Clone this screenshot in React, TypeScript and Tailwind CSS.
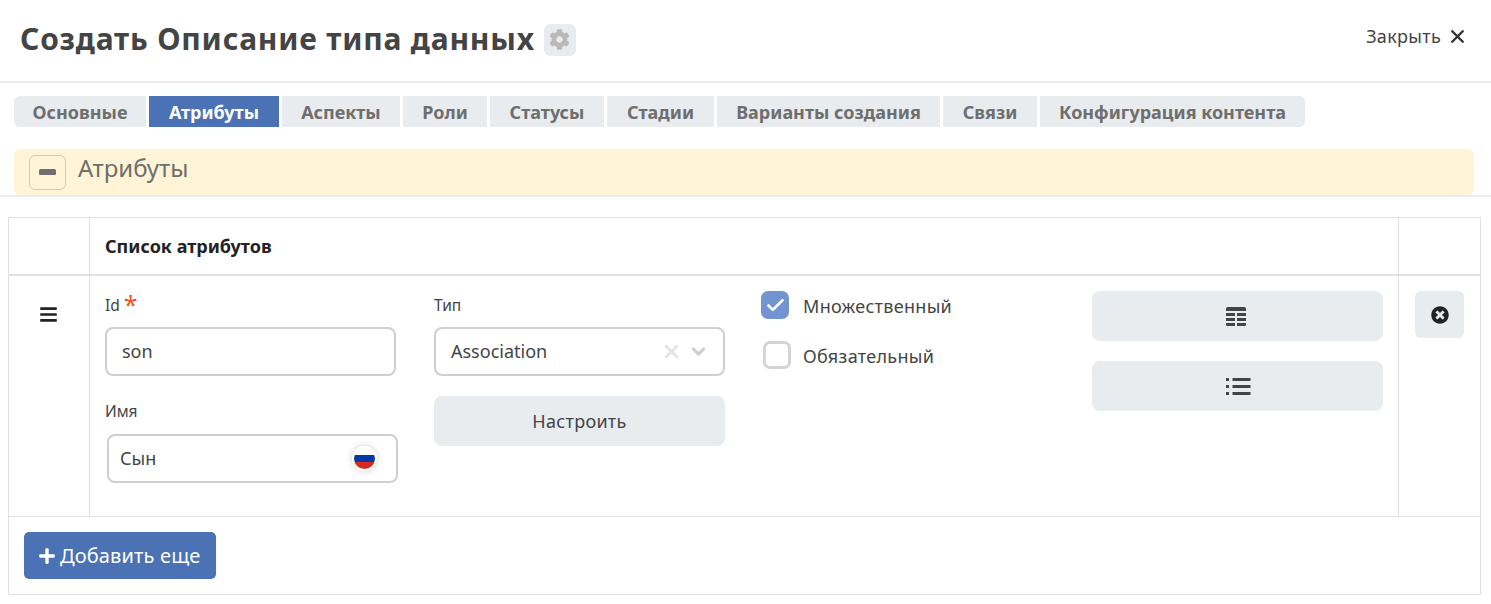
import { Check, ChevronDown, X } from "lucide-react";
import { FaTimesCircle, FaPlus, FaBars, FaCog } from "react-icons/fa";

const tabs = [
  { t: "Основные", w: "w-[132px]", c: "rounded-l-[6px]" },
  { t: "Атрибуты", w: "w-[130px]", a: true },
  { t: "Аспекты", w: "w-[118px]" },
  { t: "Роли", w: "w-[84px]" },
  { t: "Статусы", w: "w-[114px]" },
  { t: "Стадии", w: "w-[107px]" },
  { t: "Варианты создания", w: "w-[223px]" },
  { t: "Связи", w: "w-[94px]" },
  { t: "Конфигурация контента", w: "w-[265px]", c: "rounded-r-[6px]" },
];

function TableIcon() {
  return (
    <svg width="20" height="19" viewBox="0 0 20 19" fill="#444" className="mr-[3px]">
      <path d="M1.5 0h17A1.5 1.5 0 0 1 20 1.5V4H0V1.5A1.5 1.5 0 0 1 1.5 0z" />
      <rect x="0" y="6" width="9" height="3" />
      <rect x="11" y="6" width="9" height="3" />
      <rect x="0" y="11" width="9" height="3" />
      <rect x="11" y="11" width="9" height="3" />
      <path d="M0 16h9v3H1.5A1.5 1.5 0 0 1 0 17.5z" />
      <path d="M11 16h9v1.5a1.5 1.5 0 0 1-1.500 1.500H11z" />
    </svg>
  );
}

function ListIcon() {
  return (
    <svg width="25" height="20" viewBox="0 0 25 20" fill="#444" className="ml-[2px] mt-[2px]">
      <rect x="0" y="1" width="3" height="3" />
      <rect x="0" y="8" width="3" height="3" />
      <rect x="0" y="15" width="3" height="3" />
      <rect x="6.500" y="1" width="18" height="3" />
      <rect x="6.500" y="8" width="18" height="3" />
      <rect x="6.500" y="15" width="18" height="3" />
    </svg>
  );
}

export default function App() {
  return (
    <div className="w-[1491px] h-[604px] overflow-hidden bg-white text-[#444] font-['Noto_Sans',sans-serif]">
      <header className="h-[83px] border-b-2 border-[#e9edf0] flex items-center justify-between pl-[20px] pr-[23px] pb-[4px]">
        <div className="flex items-center">
          <h1 className="text-[30px] leading-[40px] font-bold text-[#444] tracking-[0.8px]">Создать Описание типа данных</h1>
          <span className="ml-[9px] mt-[2px] w-[32px] h-[32px] rounded-[6px] bg-[#e8ecef] flex items-center justify-center text-[#b9b9b9]">
            <FaCog size={21} />
          </span>
        </div>
        <div className="flex items-center text-[18px] tracking-[0.3px] text-[#444] -mt-[4px]">
          <span>Закрыть</span>
          <X size={21} strokeWidth={2.8} className="ml-[6px] text-[#333]" />
        </div>
      </header>

      <nav className="flex gap-[3px] pl-[14px] mt-[13px] h-[31px]">
        {tabs.map((x) => (
          <div
            key={x.t}
            className={`${x.w} ${x.c ?? ""} ${x.a ? "bg-[#4a72b5] text-white" : "bg-[#e8ecef] text-[#6e6e6e]"} flex items-center justify-center pt-[2px] text-[18px] font-bold`}
          >
            {x.t}
          </div>
        ))}
      </nav>

      <div className="mt-[22px] border-b-2 border-[#e9edf0] h-[48px]">
        <div className="mx-[14px] w-[1460px] h-[46px] bg-[#fff4d6] rounded-[6px] flex items-center pl-[15px]">
          <span className="w-[37px] h-[35px] border border-[#cfcabb] rounded-[6px] flex items-center justify-center">
            <svg width="17" height="6" viewBox="0 0 17 6" fill="#6e6e6e"><rect width="17" height="6" rx="1.500" /></svg>
          </span>
          <span className="ml-[12px] text-[24px] leading-[30px] text-[#6e6e6e] -mt-[9px]">Атрибуты</span>
        </div>
      </div>

      <section className="mt-[20px] ml-[8px] w-[1473px] h-[378px] border border-[#dfe1e6] flex flex-col">
        <div className="h-[58px] border-b-2 border-[#dfe1e6] grid grid-cols-[81px_1309px_1fr]">
          <div className="border-r border-[#dfe1e6]" />
          <div className="border-r border-[#dfe1e6] flex items-center pl-[15px] text-[18px] font-bold text-[#222]">Список атрибутов</div>
          <div />
        </div>

        <div className="h-[241px] border-b border-[#dfe1e6] grid grid-cols-[81px_1309px_1fr]">
          <div className="border-r border-[#dfe1e6] flex justify-center pt-[29px] pr-[2px] text-[#222]">
            <FaBars size={19} />
          </div>

          <div className="border-r border-[#dfe1e6] pl-[15px] pt-[15px] flex">
            <div className="w-[291px] shrink-0">
              <label className="flex items-start h-[36px] text-[15.500px] leading-[28px] text-[#444]">
                Id<span className="ml-[4px] -mt-[2px] text-[25px] leading-[30px] text-[#f4511e]">*</span>
              </label>
              <div className="h-[49px] border-2 border-[#cfcfcf] rounded-[8px] flex items-center pl-[15px] text-[18px] text-[#444]">son</div>
              <div className="h-[58px] pt-[25px] text-[15.500px] leading-[20px] text-[#444]">Имя</div>
              <div className="ml-[2px] w-[291px] h-[49px] border-2 border-[#cfcfcf] rounded-[8px] flex items-center justify-between pl-[11px] pr-[19px] text-[18px] text-[#444]">
                <span>Сын</span>
                <span className="w-[25px] h-[25px] rounded-full border-[2px] border-white shadow-[0_0_7px_rgba(0,0,0,0.2)] overflow-hidden flex flex-col">
                  <span className="h-[7px] bg-white" />
                  <span className="h-[7px] bg-[#0039a6]" />
                  <span className="flex-1 bg-[#d52b1e]" />
                </span>
              </div>
            </div>

            <div className="w-[291px] ml-[38px] shrink-0">
              <div className="h-[36px] text-[15.500px] leading-[28px] text-[#444]">Тип</div>
              <div className="h-[49px] border-2 border-[#cfcfcf] rounded-[8px] flex items-center pl-[15px] pr-[14px] text-[18px] text-[#444]">
                <span className="flex-1">Association</span>
                <X size={21} strokeWidth={3} className="text-[#e3e3e3]" />
                <ChevronDown size={21} strokeWidth={3.500} className="ml-[6px] text-[#cfcfcf]" />
              </div>
              <button className="mt-[20px] w-full h-[50px] rounded-[8px] bg-[#e8ecef] text-[18px] tracking-[0.3px] text-[#444]">Настроить</button>
            </div>

            <div className="w-[331px] ml-[36px] shrink-0">
              <div className="flex items-center h-[28px]">
                <span className="w-[28px] h-[28px] rounded-[7px] bg-[#7294d0] flex items-center justify-center text-white">
                  <Check size={21} strokeWidth={3} />
                </span>
                <span className="ml-[14px] pt-[2px] text-[18px] tracking-[0.3px] text-[#444]">Множественный</span>
              </div>
              <div className="flex items-center h-[28px] mt-[22px]">
                <span className="ml-[2px] w-[28px] h-[28px] rounded-[7px] border-[3px] border-[#d4d4d4]" />
                <span className="ml-[12px] pt-[2px] text-[18px] tracking-[0.3px] text-[#444]">Обязательный</span>
              </div>
            </div>

            <div className="w-[291px] shrink-0">
              <button className="w-full h-[50px] rounded-[8px] bg-[#e8ecef] flex items-center justify-center">
                <TableIcon />
              </button>
              <button className="mt-[20px] w-full h-[50px] rounded-[8px] bg-[#e8ecef] flex items-center justify-center">
                <ListIcon />
              </button>
            </div>
          </div>

          <div className="pl-[16px] pt-[15px]">
            <button className="w-[49px] h-[47px] rounded-[6px] bg-[#e8ecef] flex items-center justify-center text-[#222]">
              <FaTimesCircle size={18} />
            </button>
          </div>
        </div>

        <div className="flex-1 pl-[15px] pt-[15px]">
          <button className="w-[192px] h-[47px] rounded-[5px] bg-[#4a72b5] text-white flex items-center pl-[14px] text-[20px] tracking-[0.15px]">
            <FaPlus size={18} className="mr-[4px]" />
            Добавить еще
          </button>
        </div>
      </section>
    </div>
  );
}
